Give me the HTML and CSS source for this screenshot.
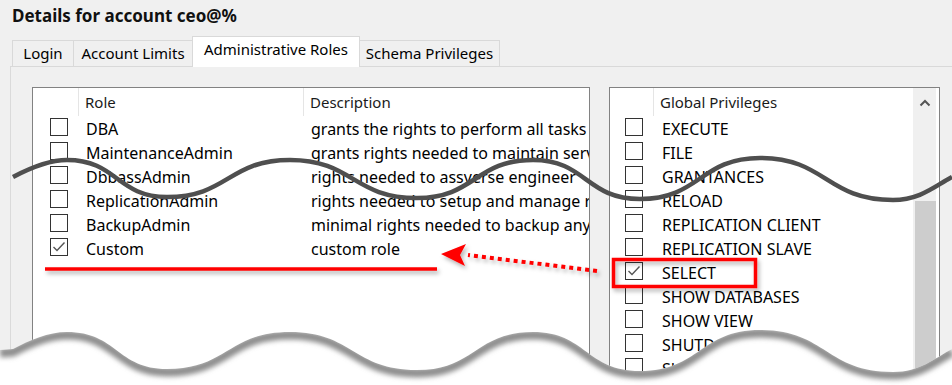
FILE: index.html
```html
<!DOCTYPE html>
<html lang="en">
<head>
    <meta charset="UTF-8">
    <title>Details for account ceo@%</title>
    <link rel="stylesheet" href="styles.css">
</head>
<body>
    <div class="window">
        <div class="title">Details for account ceo@%</div>

        <div class="tabs">
            <div class="tab tab-login">Login</div>
            <div class="tab tab-limits">Account Limits</div>
            <div class="tab tab-active">Administrative Roles</div>
            <div class="tab tab-schema">Schema Privileges</div>
        </div>

        <div class="panel">
            <!-- Roles list -->
            <div class="list roles">
                <div class="list-head">
                    <div class="col-check"></div>
                    <div class="col-role">Role</div>
                    <div class="col-desc">Description</div>
                </div>
                <div class="row"><span class="cell-check"><span class="check"></span></span><span class="role">DBA</span><span class="desc">grants the rights to perform all tasks</span></div>
                <div class="row"><span class="cell-check"><span class="check"></span></span><span class="role">MaintenanceAdmin</span><span class="desc">grants rights needed to maintain server</span></div>
                <div class="row"><span class="cell-check"><span class="check"></span></span><span class="role">DbbassAdmin</span><span class="desc">rights needed to assverse engineer</span></div>
                <div class="row"><span class="cell-check"><span class="check"></span></span><span class="role">ReplicationAdmin</span><span class="desc">rights needed to setup and manage replication</span></div>
                <div class="row"><span class="cell-check"><span class="check"></span></span><span class="role">BackupAdmin</span><span class="desc">minimal rights needed to backup any database</span></div>
                <div class="row"><span class="cell-check"><span class="check checked"></span></span><span class="role">Custom</span><span class="desc">custom role</span></div>
            </div>

            <!-- Global privileges list -->
            <div class="list privs">
                <div class="privs-body">
                    <div class="list-head">
                        <div class="col-check narrow"></div>
                        <div class="col-priv">Global Privileges</div>
                    </div>
                    <div class="row"><span class="cell-check narrow"><span class="check"></span></span><span class="priv">EXECUTE</span></div>
                    <div class="row"><span class="cell-check narrow"><span class="check"></span></span><span class="priv">FILE</span></div>
                    <div class="row"><span class="cell-check narrow"><span class="check"></span></span><span class="priv">GRANTANCES</span></div>
                    <div class="row"><span class="cell-check narrow"><span class="check"></span></span><span class="priv">RELOAD</span></div>
                    <div class="row"><span class="cell-check narrow"><span class="check"></span></span><span class="priv">REPLICATION CLIENT</span></div>
                    <div class="row"><span class="cell-check narrow"><span class="check"></span></span><span class="priv">REPLICATION SLAVE</span></div>
                    <div class="row"><span class="cell-check narrow"><span class="check checked"></span></span><span class="priv">SELECT</span></div>
                    <div class="row"><span class="cell-check narrow"><span class="check"></span></span><span class="priv">SHOW DATABASES</span></div>
                    <div class="row"><span class="cell-check narrow"><span class="check"></span></span><span class="priv">SHOW VIEW</span></div>
                    <div class="row"><span class="cell-check narrow"><span class="check"></span></span><span class="priv">SHUTDOWN</span></div>
                    <div class="row"><span class="cell-check narrow"><span class="check"></span></span><span class="priv">SUPER</span></div>
                </div>
                <div class="scrollbar">
                    <div class="scroll-up">
                        <svg width="12" height="8" viewBox="0 0 12 8"><path d="M1.5 6.5 L6 2 L10.5 6.5" fill="none" stroke="#555" stroke-width="2"/></svg>
                    </div>
                    <div class="scroll-track"></div>
                    <div class="scroll-thumb"></div>
                </div>
            </div>
        </div>

        <!-- Torn edges and red callouts drawn over the screenshot -->
        <svg class="overlay" width="952" height="385" viewBox="0 0 952 385">
            <defs>
                <filter id="drop" x="-10%" y="-50%" width="120%" height="200%">
                    <feDropShadow dx="2" dy="3" stdDeviation="2" flood-color="#000" flood-opacity="0.3"/>
                </filter>
                <filter id="blur" x="-5%" y="-50%" width="110%" height="200%">
                    <feGaussianBlur stdDeviation="2.5"/>
                </filter>
                <clipPath id="below">
                    <path d="M0 350 L13 349 C30 340 48 332 67 332 C117 332 117 369 167 369 C228 369 228 332 290 332 C353 332 353 370 417 370 C475 370 475 332 533 332 C586 332 586 371 640 371 C700 371 700 330 760 330 C826 330 826 372 893 372 C920 372 935 358 952 349 L952 385 L0 385 Z"/>
                </clipPath>
            </defs>

            <!-- middle tear line -->
            <path d="M13 177 C30 168 48 160 67 160 C117 160 117 197 167 197 C228 197 228 160 290 160 C353 160 353 198 417 198 C475 198 475 160 533 160 C586 160 586 199 640 199 C700 199 700 158 760 158 C826 158 826 200 893 200 C920 200 935 186 952 177" fill="none" stroke="#4f4f4f" stroke-width="4.5"/>

            <!-- bottom torn edge -->
            <g clip-path="url(#below)">
                <rect x="0" y="300" width="952" height="85" fill="#fff"/>
                <path d="M0 353 L13 352 C30 343 48 335 67 335 C117 335 117 372 167 372 C228 372 228 335 290 335 C353 335 353 373 417 373 C475 373 475 335 533 335 C586 335 586 374 640 374 C700 374 700 333 760 333 C826 333 826 375 893 375 C920 375 935 361 952 352" fill="none" stroke="#8c8c8c" stroke-width="9" filter="url(#blur)"/>
            </g>

            <!-- red callouts -->
            <g filter="url(#drop)">
                <line x1="45" y1="269" x2="437" y2="269" stroke="#ff0000" stroke-width="3.5"/>
                <line x1="597" y1="271" x2="468" y2="255" stroke="#ff0000" stroke-width="4" stroke-dasharray="4 4"/>
                <polygon points="441,254 466,244 460,255 465,266" fill="#ff0000"/>
                <rect x="613.5" y="259.5" width="142" height="27" fill="none" stroke="#ff0000" stroke-width="3.5"/>
            </g>
        </svg>
    </div>
</body>
</html>
```
FILE: styles.css
```css
body {
    margin: 0;
    background-color: #fff;
    font-family: "Noto Sans", "Open Sans", sans-serif;
    color: #000;
}
.window {
    position: relative;
    width: 952px;
    height: 385px;
    overflow: hidden;
    background-color: #f0f0f0;
}
.title {
    height: 23px;
    padding: 4px 12px 9px;
    font-size: 17px;
    font-weight: bold;
    line-height: 23px;
    color: #111;
}

/* Tabs */
.tabs {
    display: flex;
    align-items: flex-end;
    height: 30px;
    padding-left: 12px;
}
.tab {
    box-sizing: border-box;
    height: 26px;
    border: 1px solid #d9d9d9;
    border-bottom: none;
    border-right: none;
    background-color: #f0f0f0;
    font-size: 15px;
    line-height: 25px;
    text-align: center;
}
.tab-login { width: 61px; }
.tab-limits { width: 119px; }
.tab-active {
    position: relative;
    z-index: 1;
    width: 168px;
    height: 31px;
    margin-bottom: -1px;
    padding-bottom: 5px;
    background-color: #fff;
    border-right: 1px solid #d9d9d9;
}
.tab-schema {
    width: 140px;
    border-left: none;
    border-right: 1px solid #d9d9d9;
}

/* Tab page */
.panel {
    display: flex;
    gap: 19px;
    margin-left: 10px;
    height: 320px;
    padding: 20px 0 0 21px;
    border-top: 1px solid #d9d9d9;
    border-left: 1px solid #dadada;
    background-color: #f0f0f0;
}
.list {
    box-sizing: border-box;
    height: 300px;
    border: 1px solid #828282;
    background-color: #fff;
    overflow: hidden;
}
.roles { width: 558px; }
.privs {
    display: flex;
    width: 331px;
}
.privs-body {
    flex: 1;
    overflow: hidden;
}
.list-head {
    display: flex;
    height: 29px;
    font-size: 15px;
    line-height: 29px;
    color: #1a1a1a;
}
.list-head > div {
    box-sizing: border-box;
    height: 28px;
    border-left: 1px solid #e5e5e5;
    padding-left: 6px;
}
.list-head > .col-check {
    width: 45px;
    border-left: none;
}
.list-head > .col-check.narrow { width: 43px; }
.col-role { width: 225px; }
.col-desc { flex: 1; }
.col-priv { flex: 1; }

.row {
    display: flex;
    height: 24px;
    font-size: 16px;
    line-height: 24px;
    white-space: nowrap;
}
.cell-check {
    width: 45px;
    flex-shrink: 0;
    padding-left: 17px;
    box-sizing: border-box;
}
.cell-check.narrow {
    width: 43px;
    padding-left: 15px;
}
.check {
    display: block;
    box-sizing: border-box;
    width: 18px;
    height: 18px;
    margin-top: 1px;
    border: 1px solid #333;
    background-color: #fff;
}
.check.checked {
    background: #fff url("data:image/svg+xml;utf8,<svg xmlns='http://www.w3.org/2000/svg' width='16' height='16'><path d='M2.5 8 L6 11.5 L13.5 3.5' fill='none' stroke='%23555' stroke-width='1.4'/></svg>") no-repeat center;
}
.role {
    width: 225px;
    flex-shrink: 0;
    padding-left: 8px;
    box-sizing: border-box;
}
.desc {
    padding-left: 8px;
    overflow: hidden;
}
.priv {
    padding-left: 9px;
}

/* Scrollbar */
.scrollbar {
    display: flex;
    flex-direction: column;
    width: 23px;
    margin-right: 3px;
    background-color: #f0f0f0;
}
.scroll-up {
    display: flex;
    justify-content: center;
    align-items: center;
    height: 29px;
}
.scroll-track {
    height: 84px;
}
.scroll-thumb {
    flex: 1;
    margin: 0 0 0 2px;
    background-color: #cdcdcd;
}

/* Callouts and torn edges */
.overlay {
    position: absolute;
    top: 0;
    left: 0;
    pointer-events: none;
}
```
